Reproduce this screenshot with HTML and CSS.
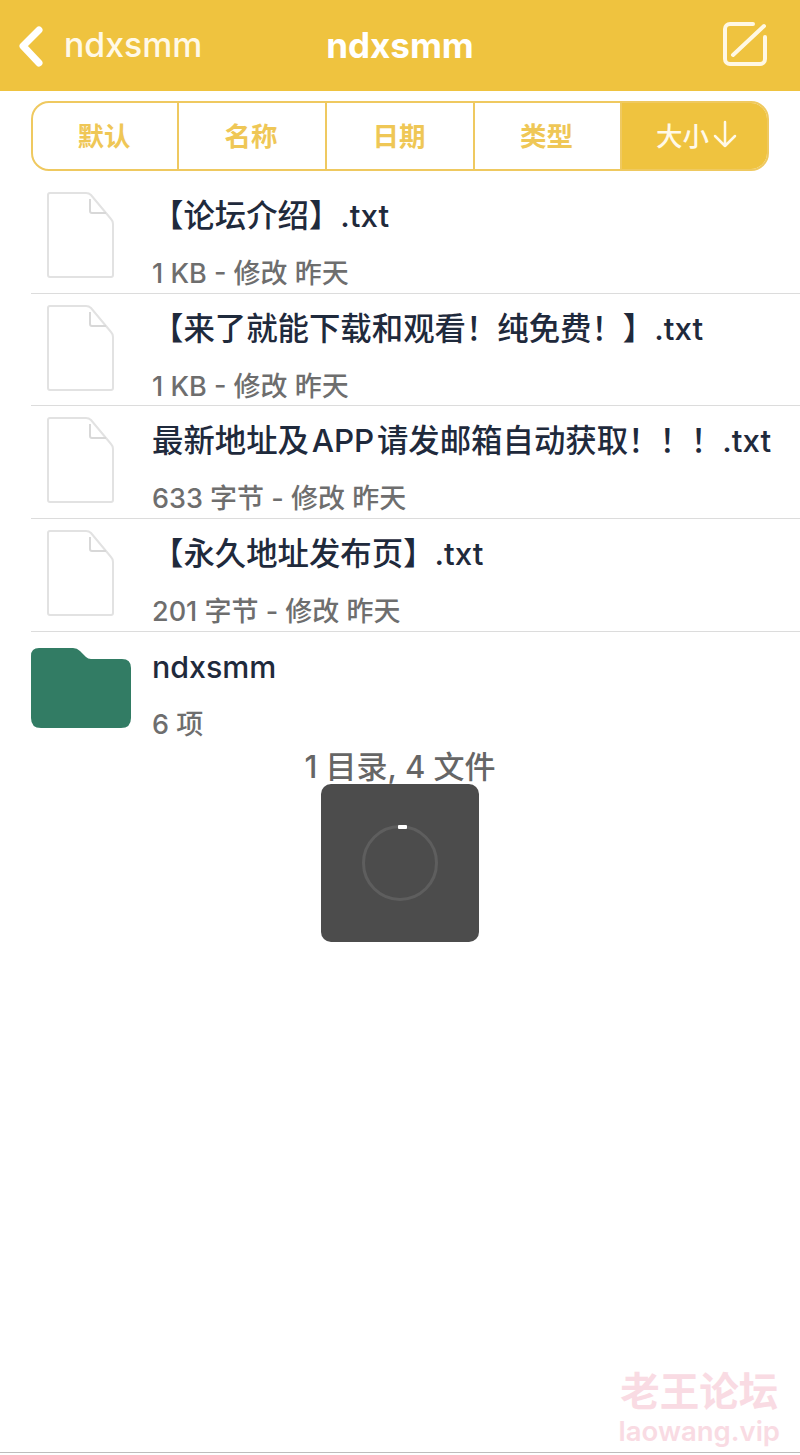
FILE: index.html
```html
<!DOCTYPE html>
<html lang="zh">
<head>
<meta charset="utf-8">
<title>ndxsmm</title>
<link rel="stylesheet" href="styles.css">
</head>
<body>
<div class="page">
  <header class="nav">
    <div class="nav-back">
      <svg class="chev" width="28" height="42" viewBox="0 0 28 42"><path d="M21 5 L5 21 L21 38" fill="none" stroke="#fff" stroke-width="7" stroke-linecap="round" stroke-linejoin="round"/></svg>
      <span class="back-text">ndxsmm</span>
    </div>
    <div class="nav-title">ndxsmm</div>
    <svg class="edit" width="46" height="46" viewBox="0 0 46 46"><path d="M31 3 H8 A5 5 0 0 0 3 8 V38 A5 5 0 0 0 8 43 H38 A5 5 0 0 0 43 38 V16" fill="none" stroke="#FFF8E4" stroke-width="4" stroke-linecap="round"/><path d="M11 34 L42 5" fill="none" stroke="#FFF8E4" stroke-width="4" stroke-linecap="round"/></svg>
  </header>

  <div class="tabs">
    <div class="tab">默认</div>
    <div class="tab">名称</div>
    <div class="tab">日期</div>
    <div class="tab">类型</div>
    <div class="tab active">大小<svg class="arrow" width="26" height="28" viewBox="0 0 26 28"><path d="M13 2 V26 M3 16 L13 26 L23 16" fill="none" stroke="#FFF9E8" stroke-width="2.500" stroke-linecap="round" stroke-linejoin="round"/></svg></div>
  </div>

  <div class="list">
    <div class="row">
      <div class="thumb"><svg width="70" height="90" viewBox="0 0 70 90"><path class="doc" d="M4 2 H40 Q43 2 45 4 L65 28 Q67 30 67 33 V84 Q67 86 65 86 H4 Q2 86 2 84 V4 Q2 2 4 2 Z"/><path class="fold" d="M44 8 V20 Q44 22 46 22 H60"/></svg></div>
      <div class="info"><div class="name">【论坛介绍】.txt</div><div class="meta">1 KB - 修改 昨天</div></div>
    </div>
    <div class="row">
      <div class="thumb"><svg width="70" height="90" viewBox="0 0 70 90"><path class="doc" d="M4 2 H40 Q43 2 45 4 L65 28 Q67 30 67 33 V84 Q67 86 65 86 H4 Q2 86 2 84 V4 Q2 2 4 2 Z"/><path class="fold" d="M44 8 V20 Q44 22 46 22 H60"/></svg></div>
      <div class="info"><div class="name">【来了就能下载和观看！纯免费！】.txt</div><div class="meta">1 KB - 修改 昨天</div></div>
    </div>
    <div class="row">
      <div class="thumb"><svg width="70" height="90" viewBox="0 0 70 90"><path class="doc" d="M4 2 H40 Q43 2 45 4 L65 28 Q67 30 67 33 V84 Q67 86 65 86 H4 Q2 86 2 84 V4 Q2 2 4 2 Z"/><path class="fold" d="M44 8 V20 Q44 22 46 22 H60"/></svg></div>
      <div class="info"><div class="name">最新地址及&#8202;APP&#8202;请发邮箱自动获取！！！.txt</div><div class="meta">633 字节 - 修改 昨天</div></div>
    </div>
    <div class="row">
      <div class="thumb"><svg width="70" height="90" viewBox="0 0 70 90"><path class="doc" d="M4 2 H40 Q43 2 45 4 L65 28 Q67 30 67 33 V84 Q67 86 65 86 H4 Q2 86 2 84 V4 Q2 2 4 2 Z"/><path class="fold" d="M44 8 V20 Q44 22 46 22 H60"/></svg></div>
      <div class="info"><div class="name">【永久地址发布页】.txt</div><div class="meta">201 字节 - 修改 昨天</div></div>
    </div>
    <div class="row last">
      <div class="thumb folder"><svg width="100" height="80" viewBox="0 0 100 80"><path d="M8 0 H42 Q46 0 49 3 L55 9 Q57 11 60 11 H91 Q100 11 100 20 V70 Q100 80 90 80 H10 Q0 80 0 70 V8 Q0 0 8 0 Z" fill="#327C64"/></svg></div>
      <div class="info"><div class="name latin">ndxsmm</div><div class="meta">6 项</div></div>
    </div>
  </div>

  <div class="summary">1 目录, 4 文件</div>

  <div class="hud">
    <svg width="78" height="78" viewBox="0 0 78 78"><circle cx="39" cy="39" r="36.500" fill="none" stroke="#5E5E5E" stroke-width="3"/><rect x="37" y="1" width="9" height="4" rx="1" fill="#fff"/></svg>
  </div>

  <div class="mark"><div class="mark-cn">老王论坛</div><div class="mark-en">laowang.vip</div></div>
  <div class="baseline"></div>
</div>
</body>
</html>
```
FILE: styles.css
```css
* { box-sizing: border-box; }
html, body { margin: 0; padding: 0; background: #fff; }
body { font-family: Inter, "Noto Sans CJK SC", "Liberation Sans", sans-serif; }
.page { position: relative; width: 800px; height: 1455px; overflow: hidden; }

.nav { height: 91px; background: #EFC33F; display: flex; align-items: center; justify-content: space-between; padding: 0 32px 0 18px; position: relative; color: #fff; }
.nav-back { display: flex; align-items: center; gap: 18px; }
.chev { display: block; }
.back-text { font-size: 33.800px; font-weight: 500; line-height: 40px; color: #FFF9E8; padding-bottom: 2px; }
.nav-title { position: absolute; left: 0; right: 0; top: 25px; text-align: center; font-size: 35px; font-weight: 700; line-height: 40px; }
.edit { display: block; position: relative; margin-top: -3px; }

.tabs { margin: 10px 31px 0; height: 70px; border: 2px solid #EFC960; border-radius: 18px; display: grid; grid-template-columns: 146px 148px 148px 147px 1fr; overflow: hidden; }
.tab { display: flex; align-items: center; justify-content: center; padding: 0 2px 4px 0; color: #EFC756; font-family: "Noto Sans CJK SC", Inter, sans-serif; font-size: 26.500px; font-weight: 700; border-right: 2px solid #EFC960; }
.tab.active { background: #EFC33F; color: #FFF9E8; border-right: 0; font-weight: 500; gap: 3px; padding: 0 0 4px 5px; }
.arrow { display: block; }

.list { margin-top: 10px; padding-left: 31px; }
.row { height: 112.670px; display: flex; border-bottom: 1px solid #DCDCDC; }
.row.last { border-bottom: 0; height: 106px; }
.thumb { width: 121px; flex: none; padding: 10px 0 0 15px; }
.thumb svg { display: block; filter: blur(0.7px); }
.thumb.folder { padding: 16px 0 0; }
.thumb.folder svg { filter: none; }
.doc { fill: #fff; stroke: #E2E2E2; stroke-width: 2; }
.fold { fill: none; stroke: #D8D8D8; stroke-width: 2; }
.info { flex: 1; min-width: 0; }
.name { color: #1F2A3C; font-size: 31.400px; font-weight: 500; line-height: 40px; margin-top: 15px; white-space: nowrap; }
.name.latin { font-size: 30.400px; }
.meta { color: #6E6E6E; font-size: 27px; font-weight: 500; line-height: 36px; margin-top: 20px; }

.summary { text-align: center; color: #666; font-size: 31px; font-weight: 500; line-height: 40px; margin-top: 9px; }

.hud { position: absolute; left: 321px; top: 784px; width: 158px; height: 158px; background: #4C4C4C; border-radius: 10px; display: flex; align-items: center; justify-content: center; }
.hud svg { display: block; }

.mark { position: absolute; right: 20px; top: 1369px; text-align: center; color: #F9DBE3; font-weight: 700; }
.mark-cn { font-size: 39.500px; line-height: 46px; }
.mark-en { font-size: 27.500px; line-height: 33px; font-weight: 600; }
.baseline { position: absolute; left: 0; right: 0; top: 1452px; height: 1px; background: #BDBDBD; }
```
